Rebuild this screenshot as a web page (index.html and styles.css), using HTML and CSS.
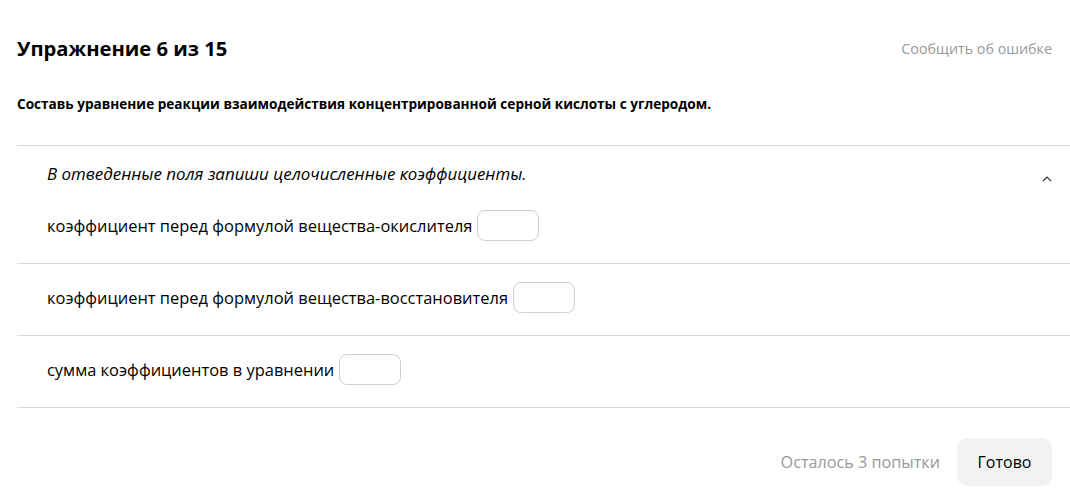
FILE: index.html
```html
<!DOCTYPE html>
<html lang="ru">
<head>
  <meta charset="UTF-8">
  <title>Упражнение 6 из 15</title>
  <link rel="stylesheet" href="styles.css">
</head>
<body>
  <div class="page">
    <div class="header">
      <h1 class="title">Упражнение 6 из 15</h1>
      <a class="report" href="#">Сообщить об ошибке</a>
    </div>

    <p class="task">Составь уравнение реакции взаимодействия концентрированной серной кислоты с углеродом.</p>

    <div class="block">
      <div class="block-head">
        <p class="hint">В отведенные поля запиши целочисленные коэффициенты.</p>
        <svg class="chevron" width="10" height="6" viewBox="0 0 10 6">
          <path d="M1 5 L5 1 L9 5" fill="none" stroke="#333" stroke-width="1.2"/>
        </svg>
      </div>
      <div class="row first">
        <span>коэффициент перед формулой вещества-окислителя</span>
        <input type="text" class="field">
      </div>
    </div>

    <div class="row">
      <span>коэффициент перед формулой вещества-восстановителя</span>
      <input type="text" class="field">
    </div>

    <div class="row">
      <span>сумма коэффициентов в уравнении</span>
      <input type="text" class="field">
    </div>

    <div class="footer">
      <span class="attempts">Осталось 3 попытки</span>
      <button class="done">Готово</button>
    </div>
  </div>
</body>
</html>
```

FILE: styles.css
```css
body {
  margin: 0;
  font-family: 'Open Sans', 'Noto Sans', sans-serif;
  color: #000;
  background: #fff;
}
.page {
  margin-left: 17px;
  padding-top: 30px;
}
.header {
  display: flex;
  justify-content: space-between;
  align-items: center;
  padding-right: 18px;
  height: 36px;
}
.title {
  margin: 0;
  font-size: 20.2px;
  font-weight: 700;
}
.report {
  color: #999;
  font-size: 14.3px;
  text-decoration: none;
}
.task {
  margin: 28px 0 0;
  font-size: 13.6px;
  font-weight: 700;
  height: 28px;
}
.block {
  border-top: 1px solid #d9d9d9;
  margin-top: 23px;
}
.block-head {
  display: flex;
  justify-content: space-between;
  align-items: center;
  padding: 16px 18px 0 30px;
}
.hint {
  margin: 0;
  font-style: italic;
  font-size: 16.9px;
}
.chevron {
  margin-top: 10px;
}
.row {
  box-sizing: border-box;
  display: flex;
  align-items: center;
  gap: 5px;
  padding: 0 30px 5px;
  height: 72px;
  border-bottom: 1px solid #d9d9d9;
  font-size: 16.45px;
}
.row.first {
  height: 79px;
  padding: 3px 30px 0;
}
.field {
  width: 62px;
  height: 31px;
  box-sizing: border-box;
  border: 1px solid #d0d0d0;
  border-radius: 8px;
  margin: 0;
}
.footer {
  display: flex;
  justify-content: flex-end;
  align-items: center;
  gap: 17px;
  padding: 30px 18px 0 0;
}
.attempts {
  color: #999;
  font-size: 16.2px;
}
.done {
  font-family: inherit;
  font-size: 16px;
  background: #f2f2f2;
  border: none;
  border-radius: 10px;
  width: 95px;
  height: 48px;
  color: #000;
}
```
